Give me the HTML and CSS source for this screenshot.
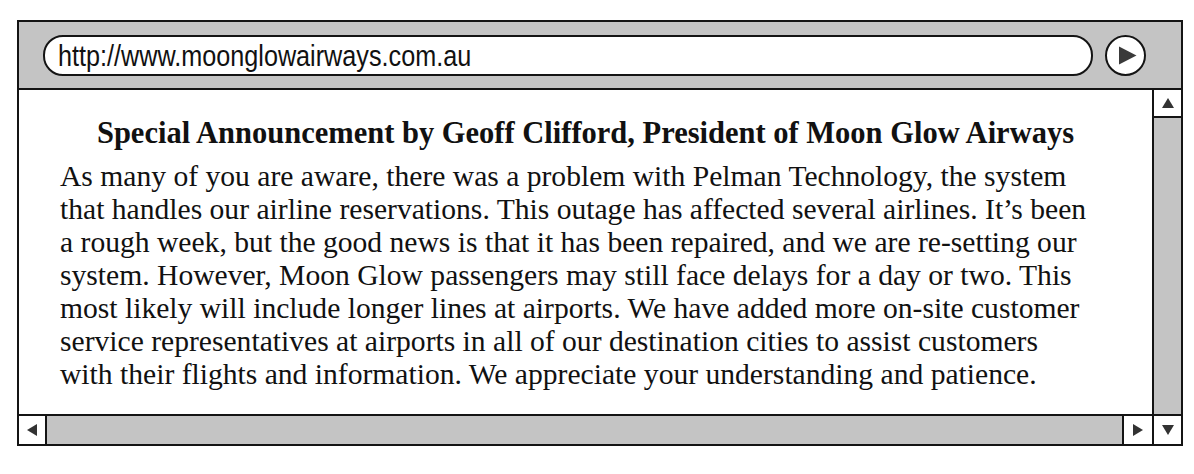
FILE: index.html
```html
<!DOCTYPE html>
<html>
<head>
<meta charset="utf-8">
<link rel="stylesheet" href="styles.css">
</head>
<body>
<div class="window">
  <div class="toolbar">
    <div class="url"><span class="url-text">http://www.moonglowairways.com.au</span></div>
    <div class="go">
      <svg width="19" height="19" viewBox="0 0 19 19"><path d="M1 0.5 L18.5 9.5 L1 18.5 Z" fill="#3a3a3a"/></svg>
    </div>
  </div>
  <div class="main">
    <div class="page">
      <h1 class="title">Special Announcement by Geoff Clifford, President of Moon Glow Airways</h1>
      <p class="body-text">As many of you are aware, there was a problem with Pelman Technology, the system
that handles our airline reservations. This outage has affected several airlines. It’s been
a rough week, but the good news is that it has been repaired, and we are re-setting our
system. However, Moon Glow passengers may still face delays for a day or two. This
most likely will include longer lines at airports. We have added more on-site customer
service representatives at airports in all of our destination cities to assist customers
with their flights and information. We appreciate your understanding and patience.</p>
    </div>
    <div class="vscroll">
      <div class="btn btn-up"><svg width="14" height="12" viewBox="0 0 14 12"><path d="M7 1 L13 11 L1 11 Z" fill="#333"/></svg></div>
      <div class="track"></div>
    </div>
  </div>
  <div class="hscroll">
    <div class="btn btn-left"><svg width="12" height="14" viewBox="0 0 12 14"><path d="M1 7 L11 1 L11 13 Z" fill="#333"/></svg></div>
    <div class="track"></div>
    <div class="btn btn-right"><svg width="12" height="14" viewBox="0 0 12 14"><path d="M11 7 L1 1 L1 13 Z" fill="#333"/></svg></div>
    <div class="btn btn-down"><svg width="14" height="12" viewBox="0 0 14 12"><path d="M7 11 L13 1 L1 1 Z" fill="#333"/></svg></div>
  </div>
</div>
</body>
</html>
```
FILE: styles.css
```css
html, body {
  margin: 0;
  padding: 0;
  background: #fff;
}
body {
  padding: 20px 0 0 17px;
}
.window {
  box-sizing: border-box;
  width: 1166px;
  height: 426px;
  border: 2px solid #141414;
  display: grid;
  grid-template-rows: 68px 1fr 30px;
}
.toolbar {
  background: #c4c4c4;
  border-bottom: 2px solid #141414;
  display: flex;
  align-items: center;
  padding-left: 24px;
}
.url {
  box-sizing: border-box;
  width: 1050px;
  height: 41px;
  border: 2px solid #141414;
  border-radius: 20px;
  background: #fff;
  font-family: "Liberation Sans", Arial, sans-serif;
  font-size: 30px;
  line-height: 37px;
  padding-left: 13px;
  color: #111;
  overflow: hidden;
  white-space: nowrap;
}
.url-text {
  display: inline-block;
  transform: scaleX(0.84);
  transform-origin: 0 50%;
}
.go {
  box-sizing: border-box;
  width: 41px;
  height: 41px;
  margin-left: 12px;
  border: 2px solid #141414;
  border-radius: 50%;
  background: #fff;
  display: flex;
  align-items: center;
  justify-content: center;
  padding-left: 3px;
}
.main {
  display: grid;
  grid-template-columns: 1fr 29px;
  min-height: 0;
}
.page {
  background: #fff;
  padding: 0 0 0 41px;
  font-family: "Liberation Serif", "Times New Roman", serif;
  color: #111;
}
.title {
  margin: 28px 0 0 0;
  font-size: 30.5px;
  font-weight: bold;
  text-align: center;
  padding-right: 41px;
  line-height: 30px;
  white-space: nowrap;
}
.body-text {
  margin: 12px 0 0 0;
  font-size: 29.6px;
  line-height: 33px;
  white-space: pre;
}
.vscroll {
  border-left: 2px solid #141414;
  background: #c4c4c4;
  display: flex;
  flex-direction: column;
}
.btn {
  background: #fff;
  display: flex;
  align-items: center;
  justify-content: center;
  box-sizing: border-box;
}
.btn-up {
  height: 28px;
  border-bottom: 2px solid #141414;
}
.track {
  flex: 1;
  background: #c4c4c4;
}
.hscroll {
  border-top: 2px solid #141414;
  display: flex;
}
.btn-left {
  width: 28px;
  border-right: 2px solid #141414;
}
.btn-right {
  width: 30px;
  border-left: 2px solid #141414;
}
.btn-down {
  width: 29px;
  border-left: 2px solid #141414;
}
```
